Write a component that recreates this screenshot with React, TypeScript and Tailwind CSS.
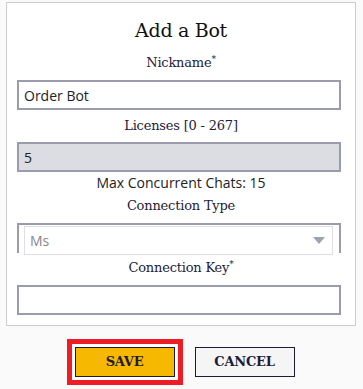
import React from 'react';

const serif = { fontFamily: '"DejaVu Serif", "Liberation Serif", serif' };
const sans = { fontFamily: '"Open Sans", "Noto Sans", sans-serif' };

function Label({ children, className = '' }: { children: React.ReactNode; className?: string }) {
  return (
    <div
      className={`flex h-[20px] items-center justify-center text-[13px] tracking-[-0.2px] text-[#1d1b38] ${className}`}
      style={serif}
    >
      {children}
    </div>
  );
}

function TextInput({ value, disabled, className = '' }: { value: string; disabled?: boolean; className?: string }) {
  return (
    <div
      className={`ml-[10px] flex h-[30px] w-[324px] items-center border-2 border-[#9a9cae] px-[5px] text-[14px] text-[#222] ${
        disabled ? 'bg-[#dcdce3]' : 'bg-white'
      } ${className}`}
      style={sans}
    >
      {value}
    </div>
  );
}

export default function App() {
  return (
    <div className="min-h-[389px] w-[363px] bg-[#fafafa] pt-[2px]">
      {/* Card */}
      <div className="ml-[6px] flex w-[350px] flex-col border border-[#cccccc] bg-white pb-[10px] pt-[13px]">
        <div className="flex h-[28px] items-center justify-center text-[19px] tracking-[-0.3px] text-[#111]" style={serif}>
          Add a Bot
        </div>
        <Label className="mt-[9px]">
          Nickname<sup className="text-[9px]">*</sup>
        </Label>
        <TextInput value="Order Bot" className="mt-[7px]" />
        <Label className="mt-[6px]">Licenses [0 - 267]</Label>
        <TextInput value="5" disabled className="mt-[6px]" />
        <div className="flex h-[20px] items-center justify-center text-[14px] text-[#222]" style={sans}>
          Max Concurrent Chats: 15
        </div>
        <Label className="mt-[4px]">Connection Type</Label>
        {/* Select */}
        <div className="relative ml-[10px] mt-[7px] h-[30px] w-[324px] border-2 border-b-0 border-[#9a9cae]">
          <div
            className="absolute left-[5px] top-[1px] flex h-[29px] w-[309px] items-center justify-between border border-[#dedee6] bg-white pl-[5px] pr-[7px] text-[14px] text-[#888]"
            style={sans}
          >
            <span>Ms</span>
            <svg width="12" height="7" viewBox="0 0 12 7">
              <path d="M0 0 L12 0 L6 7 Z" fill="#9aa5ad" />
            </svg>
          </div>
        </div>
        <Label className="mt-[5px]">
          Connection Key<sup className="text-[9px]">*</sup>
        </Label>
        <TextInput value="" className="mt-[7px]" />
      </div>

      {/* Buttons */}
      <div className="mt-[13px] flex items-center justify-center gap-[12px] pr-[2px]">
        <div className="border-[5px] border-[#ee1c25] bg-white p-[3px]">
          <button
            className="flex h-[30px] w-[100px] items-center justify-center border border-[#1d1b38] bg-[#f6b800] text-[13px] font-bold tracking-[-0.2px] text-[#1d1b38]"
            style={serif}
          >
            SAVE
          </button>
        </div>
        <button
          className="flex h-[30px] w-[100px] items-center justify-center border border-[#1d1b38] bg-[#f5f5f5] text-[13px] font-bold tracking-[-0.2px] text-[#1d1b38]"
          style={serif}
        >
          CANCEL
        </button>
      </div>
    </div>
  );
}
